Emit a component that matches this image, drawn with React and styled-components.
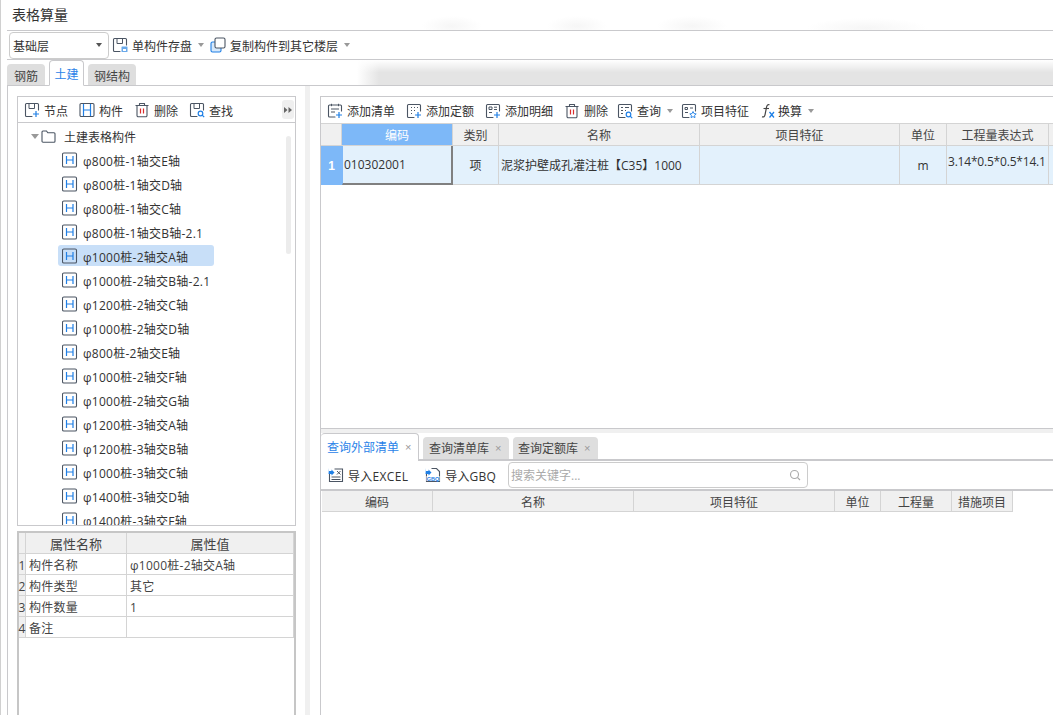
import React from "react";
import styled, { createGlobalStyle } from "styled-components";

const Global = createGlobalStyle`
  html, body { margin: 0; padding: 0; background: #fff; }
  body { font-family: "Open Sans", "Noto Sans CJK SC", "Noto Sans", sans-serif; font-size: 12px; color: #333; }
  * { box-sizing: border-box; }
`;

const LINE = "#c9c9cc";
const GRID = "#d4d4d4";
const DARK = "#4b5563";
const BLUE = "#1f7fe5";

const Shell = styled.div`
  width: 1053px; height: 715px; overflow: hidden; display: flex; flex-direction: column;
  padding-left: 6px; border-left: 1px solid #d0d0d0;
`;
const TitleBar = styled.div`
  height: 31px; flex: none; border-bottom: 1px solid ${LINE};
  padding-left: 5px; font-size: 14px; line-height: 29px; color: #333;
  background:
    radial-gradient(ellipse 30px 10px at 445px 26px, #f6f6f6, #ffffff00),
    radial-gradient(ellipse 30px 10px at 570px 26px, #f6f6f6, #ffffff00),
    radial-gradient(ellipse 35px 10px at 685px 26px, #f6f6f6, #ffffff00),
    radial-gradient(ellipse 60px 10px at 860px 28px, #f6f6f6, #ffffff00);
`;
const MainBar = styled.div`
  height: 29px; flex: none; display: flex; align-items: center; border-bottom: 1px solid ${LINE};
  padding-left: 2px;
`;
const Combo = styled.div`
  width: 100px; height: 27px; border: 1px solid #ccc; border-radius: 4px; display: flex; align-items: center;
  justify-content: space-between; padding: 0 6px 0 3px; margin-right: 3px; font-size: 12px;
`;
const Caret = styled.i`
  width: 0; height: 0; border-left: 3px solid transparent; border-right: 3px solid transparent;
  border-top: 4px solid ${p => p.$dark ? "#555" : "#999"}; display: block; flex: none;
  margin-left: ${p => p.$ml ?? 6}px; margin-right: ${p => p.$mr ?? 6}px;
`;
const Tool = styled.div`
  display: flex; align-items: center; gap: ${p => p.$gap ?? 4}px; margin-right: ${p => p.$mr ?? 0}px;
  white-space: nowrap; font-size: 12px; color: #333; flex: none;
  svg { flex: none; display: block; }
`;
const Label = styled.span`
  padding-top: 2px; letter-spacing: ${p => p.$ls ?? 0}px;
`;
const TabStrip = styled.div`
  height: 26px; flex: none; display: flex; align-items: flex-end; gap: 4px; border-bottom: 1px solid ${LINE};
  background:
    linear-gradient(180deg, #fff 0%, #ffffff00 50%),
    linear-gradient(90deg, #fff 350px, #e4e4e4 372px);
`;
const TopTab = styled.div`
  height: ${p => p.$active ? 26 : 21}px; width: ${p => p.$w}px; display: flex; align-items: center; justify-content: center;
  font-size: 12px; border-radius: 4px 4px 0 0; margin-bottom: ${p => p.$active ? -1 : 0}px;
  background: ${p => p.$active ? "#fff" : "#dedede"}; color: ${p => p.$active ? "#2a83e8" : "#444"};
  border: ${p => p.$active ? `1px solid ${LINE}` : "none"}; border-bottom: ${p => p.$active ? "1px solid #fff" : "none"};
`;
const Body = styled.div`
  flex: 1; min-height: 0; display: flex;
`;
const LeftPane = styled.div`
  width: 298px; flex: none; border-left: 1px solid ${LINE}; padding: 10px 9px 0 9px;
  display: flex; flex-direction: column;
`;
const TreePanel = styled.div`
  width: 279px; height: 430px; flex: none; border: 1px solid ${LINE}; display: flex; flex-direction: column;
`;
const TreeBar = styled.div`
  height: 26px; flex: none; border-bottom: 1px solid ${LINE}; display: flex; align-items: center; padding-left: 6px; position: relative;
`;
const MoreBtn = styled.div`
  position: absolute; right: 1px; top: 3px; width: 12px; height: 19px; background: #efefef; border-radius: 3px;
  display: flex; align-items: center; justify-content: center;
`;
const TreeList = styled.div`
  flex: 1; min-height: 0; overflow: hidden; position: relative; padding-top: 1px;
`;
const RootRow = styled.div`
  height: 24px; display: flex; align-items: center; padding-left: 13px; gap: 2px; color: #333;
`;
const RootLabel = styled(Label)`
  margin-left: 6px;
`;
const TreeRow = styled.div`
  height: 24px; flex: none; display: flex; align-items: center; padding-left: 44px; position: relative; white-space: nowrap;
  &::before {
    content: ""; position: absolute; left: 40px; top: 1px; width: 156px; height: 21px; border-radius: 3px;
    background: ${p => p.$sel ? "#c8dff8" : "transparent"};
  }
  svg, span { position: relative; }
`;
const TreeText = styled(Label)`
  margin-left: 5px; letter-spacing: .25px;
`;
const ScrollThumb = styled.div`
  position: absolute; right: 4px; top: 13px; width: 5px; height: 118px; background: #ececec; border-radius: 3px;
`;
const PropGrid = styled.div`
  flex: 1; width: 279px; margin-top: 5px; border: 2px solid #c6c6c6; border-bottom: none;
  display: grid; grid-template-columns: 7px 101px 167px; grid-auto-rows: 21px; align-content: start;
`;
const PropHead = styled.div`
  background: #f0f0f0; border-right: 1px solid ${GRID}; border-bottom: 1px solid ${GRID};
  display: flex; align-items: center; justify-content: center; font-size: 13px; color: #444;
`;
const PropNum = styled.div`
  background: #f0f0f0; border-right: 1px solid ${GRID}; border-bottom: 1px solid ${GRID}; font-size: 12px; color: #444;
  display: flex; align-items: center; justify-content: center; padding-top: 2px;
`;
const PropCell = styled.div`
  border-right: 1px solid ${GRID}; border-bottom: 1px solid ${GRID}; display: flex; align-items: center; padding: 2px 0 0 3px;
  white-space: nowrap; color: #444; letter-spacing: .25px;
`;
const Gutter = styled.div`
  width: 5px; flex: none; background: #f0f0f0;
`;
const RightPane = styled.div`
  flex: 1; min-width: 0; padding: 10px 0 0 10px; display: flex; flex-direction: column;
`;
const RightInner = styled.div`
  flex: 1; min-height: 0; border-left: 1px solid ${LINE}; display: flex; flex-direction: column;
`;
const Upper = styled.div`
  height: 332px; flex: none; border-top: 1px solid ${LINE}; display: flex; flex-direction: column;
`;
const ListBar = styled.div`
  height: 26px; flex: none; display: flex; align-items: center; padding: 1px 0 0 6px;
`;
const UpperGrid = styled.div`
  display: grid; grid-template-columns: 21px 111px 46px 201px 200px 47px 102px 20px;
  grid-template-rows: 22px 39px; border-top: 1px solid ${GRID}; width: 748px;
`;
const HeadCell = styled.div`
  background: ${p => p.$on ? "#7db8f8" : "#f0f0f0"}; color: ${p => p.$on ? "#fff" : "#444"};
  border-right: 1px solid ${GRID}; border-bottom: 1px solid ${GRID};
  display: flex; align-items: center; justify-content: center; white-space: nowrap; font-size: 12px;
`;
const LowerHead = styled(HeadCell)`
  padding-top: 2px;
`;
const RowNum = styled.div`
  background: #7db8f8; color: #fff; font-weight: 700; display: flex; align-items: center; justify-content: center;
  font-family: "Liberation Sans", sans-serif; font-size: 12px;
`;
const DataCell = styled.div`
  background: #e3f1fc; border-right: ${p => p.$sel ? "2px solid #808080" : `1px solid ${GRID}`};
  border-bottom: ${p => p.$sel ? "2px solid #808080" : `1px solid ${GRID}`};
  border-left: ${p => p.$sel ? "1px solid #7db8f8" : "none"};
  display: flex; align-items: center; justify-content: ${p => p.$center ? "center" : "flex-start"};
  padding-left: ${p => p.$center ? 0 : p.$pl ?? 2}px; padding-bottom: ${p => p.$pb ?? 0}px; white-space: nowrap; font-size: 12px; color: #333;
`;
const FormulaCell = styled(DataCell)`
  letter-spacing: -.2px;
`;
const Band = styled.div`
  height: 5px; flex: none; background: #f0f0f0; border-top: 1px solid ${LINE};
`;
const Lower = styled.div`
  flex: 1; min-height: 0; display: flex; flex-direction: column;
`;
const LowerTabs = styled.div`
  height: 28px; flex: none; display: flex; align-items: flex-end; gap: 4px; border-bottom: 2px solid ${LINE};
`;
const LowTab = styled.div`
  width: ${p => p.$w}px; height: ${p => p.$on ? 28 : 22}px; margin-bottom: ${p => p.$on ? -2 : 0}px; display: flex; align-items: center;
  padding-left: ${p => p.$pl ?? 6}px; padding-bottom: ${p => p.$on ? 1 : 0}px; white-space: nowrap; border-radius: 4px 4px 0 0; flex: none;
  background: ${p => p.$on ? "#fff" : "#dedede"}; color: ${p => p.$on ? "#2a83e8" : "#444"};
  border: ${p => p.$on ? `1px solid ${LINE}` : "none"}; border-bottom: none; border-left: none;
  b { font-weight: 400; color: #999; margin-left: 6px; font-size: 11px; font-family: "Liberation Sans", sans-serif; }
`;
const LowerBar = styled.div`
  height: 30px; flex: none; display: flex; align-items: center; padding-left: 7px; border-bottom: 2px solid ${LINE};
`;
const SearchBox = styled.div`
  width: 300px; height: 26px; border: 1px solid #ccc; border-radius: 4px; display: flex; align-items: center;
  justify-content: space-between; padding: 0 5px 0 2px; color: #aaa; font-size: 12px; flex: none;
`;
const LowerTools = styled.div`
  width: 180px; flex: none; display: flex; align-items: center;
`;
const LowerGrid = styled.div`
  display: grid; grid-template-columns: 111px 201px 201px 46px 71px 61px; grid-template-rows: 21px; width: 691px; margin-left: 1px;
`;

const Frame = ({ d, children, w = 16, h = 16, sw = 1.1 }) => (
  <svg width={w} height={h} viewBox="0 0 16 16" fill="none">
    <path d={d} stroke={DARK} strokeWidth={sw} strokeLinecap="round" strokeLinejoin="round" />
    {children}
  </svg>
);
const Plus = ({ x = 12, y = 12 }) => (
  <path d={`M${x - 3} ${y}h6M${x} ${y - 3}v6`} stroke={BLUE} strokeWidth="1.2" />
);
const OPEN = "M8 14.5H2.5a1 1 0 0 1-1-1v-11a1 1 0 0 1 1-1h11a1 1 0 0 1 1 1V8";
const NodeIcon = () => (
  <Frame d={OPEN}><path d="M5 2v4.500h5.500" stroke={DARK} strokeWidth="1" /><path d="M10.500 2v4.500" stroke={DARK} strokeWidth="1" /><Plus /></Frame>
);
const BeamToolIcon = () => (
  <svg width="16" height="16" viewBox="0 0 16 16" fill="none">
    <rect x="1" y="1.500" width="14" height="13" rx="1.200" stroke={DARK} strokeWidth="1.100" />
    <path d="M4.500 2v12M11.500 2v12M4.500 8h7" stroke={BLUE} strokeWidth="1.200" />
  </svg>
);
const BeamIcon = () => (
  <svg width="16" height="16" viewBox="0 0 16 16" fill="none">
    <rect x=".5" y="1" width="14" height="14" rx="1.300" stroke={DARK} strokeWidth="1.100" />
    <path d="M4.500 4v8M11 4v8M4.500 8H11" stroke={BLUE} strokeWidth="1.200" />
  </svg>
);
const TrashIcon = () => (
  <svg width="16" height="16" viewBox="0 0 16 16" fill="none">
    <path d="M1.500 3.500h13M5.500 3.500V1.500h5v2M3 3.500v10a1.200 1.200 0 0 0 1.200 1.200h7.600a1.200 1.200 0 0 0 1.200-1.200v-10" stroke={DARK} strokeWidth="1.100" strokeLinejoin="round" />
    <path d="M6.500 6.500v5M9.500 6.500v5" stroke="#d92c2c" strokeWidth="1.200" />
  </svg>
);
const FindIcon = () => (
  <Frame d={OPEN}>
    <path d="M5 2v4.500h5.500M10.500 2v4.500" stroke={DARK} strokeWidth="1" />
    <circle cx="11.500" cy="11.500" r="2.300" stroke={BLUE} strokeWidth="1.200" /><path d="M13.200 13.200l2 2" stroke={BLUE} strokeWidth="1.200" />
  </Frame>
);
const SaveIcon = () => (
  <Frame d={OPEN}>
    <path d="M5 2v4.500h5.500M10.500 2v4.500" stroke={DARK} strokeWidth="1" />
    <rect x="9.500" y="9.500" width="6" height="5.500" rx=".5" fill="#6aa9ea" />
    <rect x="11" y="12" width="3" height="2" fill="#fff" />
  </Frame>
);
const CopyIcon = () => (
  <svg width="16" height="16" viewBox="0 0 16 16" fill="none">
    <rect x="1" y="5" width="10" height="10" rx="1.500" fill="#d7e9fb" stroke={BLUE} strokeWidth="1.100" />
    <rect x="5" y="1" width="10" height="10" rx="1.500" fill="#fff" stroke={DARK} strokeWidth="1.100" />
  </svg>
);
const FolderIcon = () => (
  <svg width="15" height="13" viewBox="0 0 15 13" fill="none">
    <path d="M1 11.200V2a1 1 0 0 1 1-1h3.500l1.300 1.800H13a1 1 0 0 1 1 1v7.400a1 1 0 0 1-1 1H2a1 1 0 0 1-1-1z" stroke={DARK} strokeWidth="1.100" />
  </svg>
);
const ChevronPair = () => (
  <svg width="8" height="6" viewBox="0 0 8 6"><path d="M0 0l3.500 3L0 6zM4.500 0L8 3 4.500 6z" fill="#666" /></svg>
);
const ListAdd = () => (
  <Frame d="M8 14H2.500a1 1 0 0 1-1-1V3a1 1 0 0 1 1-1h11a1 1 0 0 1 1 1v5">
    <path d="M4.500.8v2.400M11.500.8v2.400M4 6h8M4 9h4" stroke={DARK} strokeWidth="1" /><Plus />
  </Frame>
);
const QuotaAdd = () => (
  <Frame d={OPEN}>
    <path d="M5 4.500h1M8 4.500h1M11 4.500h1M5 7.500h1M8 7.500h1M5 10.500h1" stroke={DARK} strokeWidth="1" /><Plus />
  </Frame>
);
const DetailAdd = () => (
  <Frame d={OPEN}>
    <path d="M4 4h3v2.500H4zM4 9.500h3M9 4.200h3M9 6.500h3" stroke={DARK} strokeWidth="1" /><Plus />
  </Frame>
);
const QueryIcon = () => (
  <Frame d={OPEN}>
    <path d="M4 4.500h2M8 4.500h4M4 7.500h2M8 7.500h1M4 10.500h2" stroke={DARK} strokeWidth="1" />
    <circle cx="11.500" cy="11.500" r="2.300" stroke={BLUE} strokeWidth="1.200" /><path d="M13.200 13.200l2 2" stroke={BLUE} strokeWidth="1.200" />
  </Frame>
);
const FeatureIcon = () => (
  <Frame d={OPEN}>
    <path d="M4 4.500h2.500v2H4zM9 5h3M4 9.500h3" stroke={DARK} strokeWidth="1" />
    <path d="M12 8.500l1 2.100 2.200.3-1.600 1.500.4 2.200-2-1-2 1 .4-2.200-1.600-1.500 2.200-.3z" stroke={BLUE} strokeWidth=".9" />
  </Frame>
);
const FxIcon = () => (
  <svg width="16" height="16" viewBox="0 0 16 16" fill="none">
    <path d="M9.500 1.800c-1.600-.6-2.500.2-2.900 2L5 11.800c-.4 1.800-1.300 2.500-3 2" stroke="#444" strokeWidth="1.200" />
    <path d="M3.500 5.500h5.500" stroke="#444" strokeWidth="1.100" />
    <path d="M9.500 9l4.500 5.500M14 9l-4.500 5.500" stroke={BLUE} strokeWidth="1.300" />
  </svg>
);
const ExcelIcon = () => (
  <svg width="16" height="16" viewBox="0 0 16 16" fill="none">
    <path d="M6.500 2h8v12.500h-13V7" stroke={DARK} strokeWidth="1.100" />
    <path d="M9 4l3.500 3.500M12.500 4L9 7.500M3.500 10h9M3.500 12.500h9" stroke={DARK} strokeWidth="1" />
    <path d="M1 1v3h2.500V2.500l3 3-3 3V7H.5" fill={BLUE} />
  </svg>
);
const GbqIcon = () => (
  <svg width="16" height="16" viewBox="0 0 16 16" fill="none">
    <path d="M6.500 1.500h5l3 3v10h-13V7" stroke={DARK} strokeWidth="1.100" />
    <path d="M1 1v3h2.500V2.500l3 3-3 3V7H.5" fill={BLUE} />
    <rect x="1.500" y="9" width="13" height="5" fill="#fff" />
    <text x="8" y="13.600" textAnchor="middle" fontSize="5.500" fontWeight="700" fontFamily="Liberation Sans, sans-serif" fill={BLUE}>GBQ</text>
  </svg>
);
const SearchGlyph = () => (
  <svg width="14" height="14" viewBox="0 0 14 14" fill="none">
    <circle cx="6.500" cy="6.500" r="4" stroke="#aaa" strokeWidth="1.100" /><path d="M9.500 9.500l2.500 2.500" stroke="#aaa" strokeWidth="1.100" />
  </svg>
);
const TreeCaret = styled.i`
  width: 0; height: 0; border-left: 4px solid transparent; border-right: 4px solid transparent;
  border-top: 5px solid #999; display: block;
`;

const items = ["φ800桩-1轴交E轴","φ800桩-1轴交D轴","φ800桩-1轴交C轴","φ800桩-1轴交B轴-2.1","φ1000桩-2轴交A轴","φ1000桩-2轴交B轴-2.1","φ1200桩-2轴交C轴","φ1000桩-2轴交D轴","φ800桩-2轴交E轴","φ1000桩-2轴交F轴","φ1000桩-2轴交G轴","φ1200桩-3轴交A轴","φ1200桩-3轴交B轴","φ1000桩-3轴交C轴","φ1400桩-3轴交D轴","φ1400桩-3轴交F轴"];
const props = [["1","构件名称","φ1000桩-2轴交A轴"],["2","构件类型","其它"],["3","构件数量","1"],["4","备注",""]];

export default function App() {
  return (
    <>
      <Global />
      <Shell>
        <TitleBar>表格算量</TitleBar>
        <MainBar>
          <Combo><Label>基础层</Label><Caret $dark $ml={0} $mr={0} /></Combo>
          <Tool><SaveIcon /><Label>单构件存盘</Label></Tool><Caret />
          <Tool><CopyIcon /><Label>复制构件到其它楼层</Label></Tool><Caret />
        </MainBar>
        <TabStrip>
          <TopTab $w={38}><Label>钢筋</Label></TopTab>
          <TopTab $active $w={35}><Label>土建</Label></TopTab>
          <TopTab $w={48}><Label>钢结构</Label></TopTab>
        </TabStrip>
        <Body>
          <LeftPane>
            <TreePanel>
              <TreeBar>
                <Tool $mr={11}><NodeIcon /><Label>节点</Label></Tool>
                <Tool $mr={11}><BeamToolIcon /><Label>构件</Label></Tool>
                <Tool $mr={11}><TrashIcon /><Label>删除</Label></Tool>
                <Tool><FindIcon /><Label>查找</Label></Tool>
                <MoreBtn><ChevronPair /></MoreBtn>
              </TreeBar>
              <TreeList>
                <RootRow><TreeCaret /><FolderIcon /><RootLabel>土建表格构件</RootLabel></RootRow>
                {items.map((t, i) => (
                  <TreeRow key={i} $sel={i === 4}><BeamIcon /><TreeText>{t}</TreeText></TreeRow>
                ))}
                <ScrollThumb />
              </TreeList>
            </TreePanel>
            <PropGrid>
              <PropHead /><PropHead>属性名称</PropHead><PropHead>属性值</PropHead>
              {props.map(([n, a, b]) => (
                <React.Fragment key={n}>
                  <PropNum>{n}</PropNum><PropCell>{a}</PropCell><PropCell>{b}</PropCell>
                </React.Fragment>
              ))}
            </PropGrid>
          </LeftPane>
          <Gutter />
          <RightPane>
            <RightInner>
              <Upper>
                <ListBar>
                  <Tool $mr={11}><ListAdd />添加清单</Tool>
                  <Tool $mr={11}><QuotaAdd />添加定额</Tool>
                  <Tool $mr={11}><DetailAdd />添加明细</Tool>
                  <Tool $mr={9}><TrashIcon />删除</Tool>
                  <Tool><QueryIcon />查询</Tool><Caret $mr={8} />
                  <Tool $mr={11}><FeatureIcon />项目特征</Tool>
                  <Tool $gap={2}><FxIcon />换算</Tool><Caret />
                </ListBar>
                <UpperGrid>
                  <HeadCell />
                  <HeadCell $on>编码</HeadCell>
                  <HeadCell>类别</HeadCell>
                  <HeadCell>名称</HeadCell>
                  <HeadCell>项目特征</HeadCell>
                  <HeadCell>单位</HeadCell>
                  <HeadCell>工程量表达式</HeadCell>
                  <HeadCell />
                  <RowNum>1</RowNum>
                  <DataCell $sel $pl={1}>010302001</DataCell>
                  <DataCell $center>项</DataCell>
                  <DataCell>泥浆护壁成孔灌注桩【C35】1000</DataCell>
                  <DataCell />
                  <DataCell $center>m</DataCell>
                  <FormulaCell $pl={1} $pb={8}>3.14*0.5*0.5*14.1</FormulaCell>
                  <DataCell />
                </UpperGrid>
              </Upper>
              <Band />
              <Lower>
                <LowerTabs>
                  <LowTab $on $w={98}>查询外部清单<b>×</b></LowTab>
                  <LowTab $w={86}>查询清单库<b>×</b></LowTab>
                  <LowTab $w={85} $pl={5}>查询定额库<b>×</b></LowTab>
                </LowerTabs>
                <LowerBar>
                  <LowerTools>
                    <Tool $mr={17}><ExcelIcon /><Label $ls={0.3}>导入EXCEL</Label></Tool>
                    <Tool><GbqIcon /><Label $ls={0.2}>导入GBQ</Label></Tool>
                  </LowerTools>
                  <SearchBox>搜索关键字...<SearchGlyph /></SearchBox>
                </LowerBar>
                <LowerGrid>
                  <LowerHead>编码</LowerHead>
                  <LowerHead>名称</LowerHead>
                  <LowerHead>项目特征</LowerHead>
                  <LowerHead>单位</LowerHead>
                  <LowerHead>工程量</LowerHead>
                  <LowerHead>措施项目</LowerHead>
                </LowerGrid>
              </Lower>
            </RightInner>
          </RightPane>
        </Body>
      </Shell>
    </>
  );
}
